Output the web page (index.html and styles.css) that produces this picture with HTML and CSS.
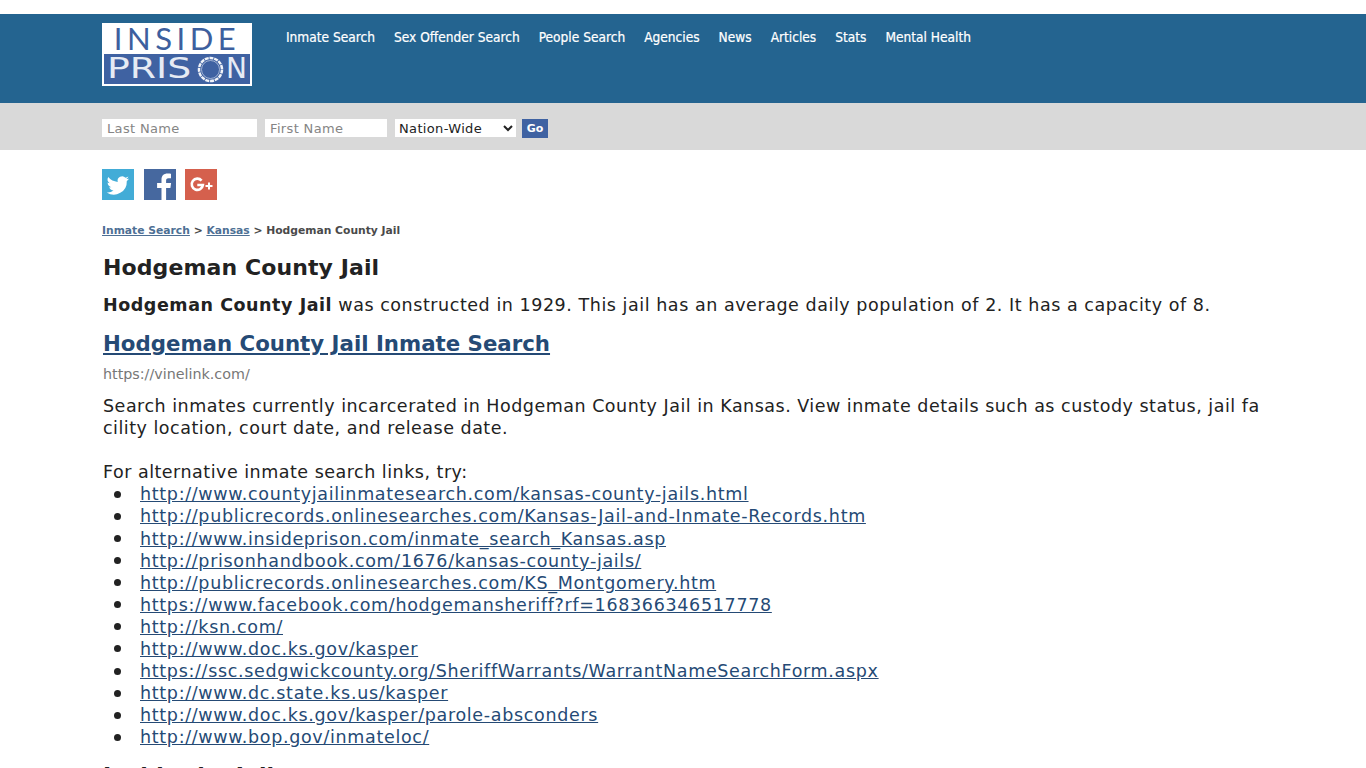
FILE: index.html
```html
<!DOCTYPE html>
<html lang="en">
<head>
    <meta charset="UTF-8">
    <meta name="viewport" content="width=device-width, initial-scale=1.0">
    <title>Hodgeman County Jail</title>
    <link rel="stylesheet" href="styles.css">
</head>
<body>

    <div class="header">
        <div class="wrap header-inner">
            <a class="logo" href="#">
                <span class="logo-top">Inside</span>
                <span class="logo-bottom">
                    <span class="logo-word">Pris</span>
                    <svg class="logo-ring" viewBox="0 0 27 27" width="27" height="27">
                        <circle cx="13.500" cy="13.500" r="11.500" fill="none" stroke="#f0f3f8" stroke-width="2.500" stroke-dasharray="4 .8"/>
                        <circle cx="13.500" cy="13.500" r="9" fill="none" stroke="#c9d3e6" stroke-width=".7"/>
                    </svg>
                    <span class="logo-end">N</span>
                </span>
            </a>
            <ul class="nav">
                <li><a href="#">Inmate Search</a></li>
                <li><a href="#">Sex Offender Search</a></li>
                <li><a href="#">People Search</a></li>
                <li><a href="#">Agencies</a></li>
                <li><a href="#">News</a></li>
                <li><a href="#">Articles</a></li>
                <li><a href="#">Stats</a></li>
                <li><a href="#">Mental Health</a></li>
            </ul>
        </div>
    </div>

    <div class="search-bar">
        <form class="wrap search-form">
            <input class="field field-last" type="text" placeholder="Last Name">
            <input class="field field-first" type="text" placeholder="First Name">
            <select class="field field-state">
                <option>Nation-Wide</option>
            </select>
            <button class="go" type="button">Go</button>
        </form>
    </div>

    <div class="wrap content">
        <div class="social">
            <a class="share share-tw" href="#">
                <svg viewBox="0 0 32 32" width="32" height="32"><path fill="#fff" d="M27 9.400c-.8.400-1.700.600-2.600.700.900-.600 1.600-1.400 2-2.500-.9.500-1.900.900-2.900 1.100a4.600 4.600 0 0 0-7.800 4.200C11.900 12.700 8.500 10.900 6.300 8.100a4.600 4.600 0 0 0 1.400 6.100c-.7 0-1.400-.2-2.100-.6 0 2.300 1.600 4.200 3.700 4.600-.7.200-1.400.2-2.100.1.600 1.900 2.300 3.200 4.300 3.200A9.300 9.300 0 0 1 4.700 23.400 13 13 0 0 0 24.800 11.900c.9-.6 1.600-1.400 2.200-2.500z"/></svg>
            </a>
            <a class="share share-fb" href="#">
                <svg viewBox="0 0 32 32" width="32" height="32"><path fill="#fff" d="M17.500 32V19h-4.400v-5h4.400v-3.500C17.500 6.500 20 4.500 23.500 4.500c1.700 0 3.100.1 3.500.2v4.500h-2.500c-2 0-2.400 1-2.400 2.300V14h5l-.7 5h-4.300v13z"/></svg>
            </a>
            <a class="share share-gp" href="#">
                <svg viewBox="0 0 32 32" width="32" height="32"><path fill="none" stroke="#fff" stroke-width="2.600" d="M16.600 11.600a5.600 5.600 0 1 0 1.300 4.400h-5.600"/><path fill="#fff" d="M23 13.500h2v2.500h2.500v2H25v2.500h-2V18h-2.500v-2H23z"/></svg>
            </a>
        </div>

        <div class="crumbs"><a href="#">Inmate Search</a> &gt; <a href="#">Kansas</a> &gt; Hodgeman County Jail</div>

        <h1>Hodgeman County Jail</h1>
        <p class="intro"><b>Hodgeman County Jail</b> was constructed in 1929. This jail has an average daily population of 2. It has a capacity of 8.</p>

        <h2 class="result-title"><a href="#">Hodgeman County Jail Inmate Search</a></h2>
        <div class="result-url">https://vinelink.com/</div>

        <div class="body-text">
            Search inmates currently incarcerated in Hodgeman County Jail in Kansas. View inmate details such as custody status, jail facility location, court date, and release date.<br><br>
            For alternative inmate search links, try:
            <ul class="links">
                <li><a href="#">http://www.countyjailinmatesearch.com/kansas-county-jails.html</a></li>
                <li><a href="#">http://publicrecords.onlinesearches.com/Kansas-Jail-and-Inmate-Records.htm</a></li>
                <li><a href="#">http://www.insideprison.com/inmate_search_Kansas.asp</a></li>
                <li><a href="#">http://prisonhandbook.com/1676/kansas-county-jails/</a></li>
                <li><a href="#">http://publicrecords.onlinesearches.com/KS_Montgomery.htm</a></li>
                <li><a href="#">https://www.facebook.com/hodgemansheriff?rf=168366346517778</a></li>
                <li><a href="#">http://ksn.com/</a></li>
                <li><a href="#">http://www.doc.ks.gov/kasper</a></li>
                <li><a href="#">https://ssc.sedgwickcounty.org/SheriffWarrants/WarrantNameSearchForm.aspx</a></li>
                <li><a href="#">http://www.dc.state.ks.us/kasper</a></li>
                <li><a href="#">http://www.doc.ks.gov/kasper/parole-absconders</a></li>
                <li><a href="#">http://www.bop.gov/inmateloc/</a></li>
            </ul>
        </div>

        <h2 class="next-title">Inside the Jail</h2>
    </div>

</body>
</html>
```

FILE: styles.css
```css
* {
    box-sizing: border-box;
}

html, body {
    margin: 0;
    padding: 0;
}

body {
    background: #fff;
    color: #222;
    font-family: "DejaVu Sans", Verdana, sans-serif;
    padding-top: 14px;
    height: 768px;
    overflow: hidden;
}

a {
    color: #254a75;
}

.wrap {
    width: 1162px;
    margin-left: 102px;
}

/*--------------------
Header
--------------------*/
.header {
    background: #246490;
    height: 89px;
    padding-top: 9px;
}

.header-inner {
    display: flex;
}

.logo {
    width: 150px;
    height: 63px;
    flex: none;
    background: #fff;
    display: flex;
    flex-direction: column;
    text-decoration: none;
    text-transform: uppercase;
    overflow: hidden;
}

.logo-top {
    height: 30px;
    font-family: Lato, "Liberation Sans", sans-serif;
    line-height: 30px;
    font-size: 31px;
    letter-spacing: 4.500px;
    color: #3d5f9e;
    text-align: center;
}

.logo-bottom {
    height: 30px;
    margin: 1px 2px 0;
    padding-left: 3px;
    background: #3f62a2;
    color: #e6ebf4;
    font-family: "DejaVu Sans", sans-serif;
    line-height: 30px;
    font-size: 28px;
    display: flex;
    align-items: center;
}

.logo-word {
    width: 90px;
    flex: none;
    transform: scaleX(1.35);
    transform-origin: left center;
}

.logo-ring {
    flex: none;
}

.logo-end {
    margin-left: 2px;
}

.nav {
    list-style: none;
    display: flex;
    gap: 19px;
    margin: 6px 0 0 34px;
    padding: 0;
}

.nav a {
    color: #fff;
    font-family: "DejaVu Sans Condensed", "DejaVu Sans", sans-serif;
    font-stretch: condensed;
    font-size: 13.600px;
    -webkit-text-stroke: .2px #fff;
    text-decoration: none;
    line-height: 16px;
    display: block;
    white-space: nowrap;
}

/*--------------------
Search
--------------------*/
.search-bar {
    background: #d9d9d9;
    height: 47px;
    padding-top: 16px;
}

.search-form {
    display: flex;
    align-items: flex-start;
}

.field {
    height: 18px;
    border: none;
    border-radius: 0;
    background: #fff;
    color: #222;
    font-family: "DejaVu Sans", Verdana, sans-serif;
    font-size: 13px;
    letter-spacing: .35px;
    padding: 0 5px;
    margin: 0 8px 0 0;
    outline: none;
}

.field::placeholder {
    color: #858585;
}

.field-last {
    width: 155px;
}

.field-first {
    width: 122px;
}

.field-state {
    width: 121px;
    padding: 0;
    margin-right: 6px;
}

.go {
    width: 26px;
    height: 19px;
    border: none;
    background: #3f62a2;
    color: #fff;
    font-family: "DejaVu Sans", Verdana, sans-serif;
    font-size: 11px;
    font-weight: bold;
    padding: 0;
}

/*--------------------
Content
--------------------*/
.content {
    font-size: 17.500px;
    line-height: 22.080px;
    letter-spacing: .55px;
}

.social {
    display: flex;
    gap: 10px;
    padding-top: 19px;
}

.share {
    display: block;
    width: 32px;
    height: 31px;
    overflow: hidden;
}

.share-tw {
    background: #42acd7;
}

.share-fb {
    background: #46689f;
}

.share-gp {
    background: #d5604d;
    margin-left: -1px;
}

.crumbs {
    font-size: 10.750px;
    font-weight: bold;
    letter-spacing: 0;
    color: #4a4a4a;
    line-height: 14px;
    margin-top: 24px;
}

.crumbs a {
    color: #4d6f94;
}

h1 {
    font-size: 22px;
    line-height: 28px;
    letter-spacing: .1px;
    color: #222;
    margin: 16px 0 0 1px;
}

.intro {
    margin: 12px 0 0 1px;
}

.result-title {
    font-size: 21.300px;
    letter-spacing: 0;
    line-height: 28px;
    margin: 14px 0 0 1px;
}

.result-url {
    font-size: 14.300px;
    letter-spacing: 0;
    line-height: 18px;
    color: #777;
    margin: 7px 0 0 1px;
}

.body-text {
    margin: 12px 0 0 1px;
    letter-spacing: .5px;
    word-break: break-all;
}

.links {
    list-style: none;
    margin: 0;
    padding-left: 11px;
    letter-spacing: .68px;
}

.links li {
    display: flex;
    align-items: center;
    gap: 19px;
}

.links li::before {
    content: "";
    width: 7px;
    height: 7px;
    border-radius: 50%;
    background: #222;
    flex: none;
}

.next-title {
    font-size: 22px;
    letter-spacing: .1px;
    line-height: 28px;
    margin: 14px 0 0 1px;
}
```
